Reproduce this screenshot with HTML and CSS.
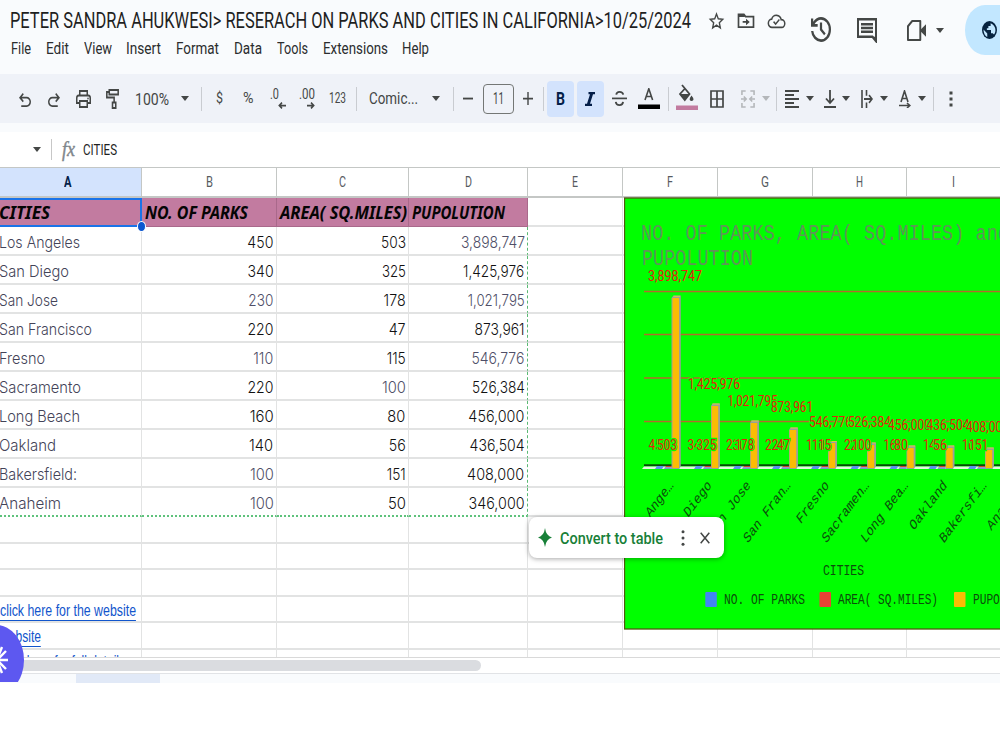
FILE: index.html
```html
<!DOCTYPE html>
<html lang="en">
<head>
<meta charset="utf-8">
<title>Parks and cities</title>
<link rel="stylesheet" href="styles.css">
</head>
<body>
<div class="app">
<header class="top">
  <div class="top-left">
    <div class="title-row">
      <span class="title" data-w="681">PETER SANDRA AHUKWESI&gt; RESERACH ON PARKS AND CITIES IN CALIFORNIA&gt;10/25/2024</span>
      <svg class="ic star" viewBox="0 0 24 24" preserveAspectRatio="none"><path d="M12 3.6l2.5 5.8 6.2.6-4.7 4.1 1.4 6.2-5.4-3.3-5.4 3.3L8 14.100 3.300 10l6.200-.6z" fill="none" stroke="#444746" stroke-width="1.900"/></svg>
      <svg class="ic folder" viewBox="0 0 24 24" preserveAspectRatio="none"><path d="M3 5h6.500l2 2.500H21V19.500H3z" fill="none" stroke="#444746" stroke-width="2"/><path d="M3 5h6l2 3H3zM8 12.700h4V10l4.500 3.700-4.500 3.700v-2.700H8z" fill="#444746"/></svg>
      <svg class="ic cloud" viewBox="0 0 24 24" preserveAspectRatio="none"><path d="M6.500 19a4.500 4.500 0 0 1-.6-9A6.300 6.300 0 0 1 18 10.600 4.200 4.200 0 0 1 18.500 19z" fill="none" stroke="#444746" stroke-width="1.900"/><path d="M8.300 12.700l2.600 2.600 4.700-4.900" fill="none" stroke="#444746" stroke-width="1.800"/></svg>
    </div>
    <nav class="menu">
      <span data-w="20">File</span><span data-w="23">Edit</span><span data-w="28">View</span><span data-w="35">Insert</span><span data-w="43">Format</span><span data-w="28">Data</span><span data-w="31">Tools</span><span data-w="65">Extensions</span><span data-w="27">Help</span>
    </nav>
  </div>
  <div class="top-right">
    <svg class="ic history" viewBox="3 3 18 18" preserveAspectRatio="none"><path fill="#444746" d="M12 21q-3.450 0-6.012-2.287T3.050 13H5.100q.35 2.600 2.313 4.300T12 19q2.925 0 4.963-2.037T19 12t-2.037-4.962T12 5q-1.725 0-3.225.8T6.250 8H9v2H3V4h2v2.350q1.275-1.600 3.113-2.475T12 3q1.875 0 3.513.713t2.850 1.924 1.925 2.850T21 12t-.712 3.513-1.925 2.850-2.850 1.925T12 21m2.800-4.800L11 12.400V7h2v4.600l3.200 3.200z"/></svg>
    <svg class="ic comment" viewBox="2 2 20 20" preserveAspectRatio="none"><path d="M3 3h18v17.500L17.500 17H3z" fill="none" stroke="#444746" stroke-width="2"/><path d="M6 7h12M6 10h12M6 13h12" stroke="#444746" stroke-width="1.900"/><path d="M22 22l-5-5h5z" fill="#444746"/></svg>
    <svg class="ic video" viewBox="0 0 20 20" preserveAspectRatio="none"><path d="M5.500 1H14V19H1V6z" fill="none" stroke="#444746" stroke-width="2" stroke-linejoin="round"/><path d="M14.500 9L20 4v12l-5.500-5z" fill="#444746"/></svg>
    <svg class="caret" viewBox="0 0 8 6" preserveAspectRatio="none"><path d="M0 0h8L4 6z"/></svg>
    <div class="share"><svg class="globe" viewBox="0 0 20 20" preserveAspectRatio="none"><circle cx="10" cy="10" r="10" fill="#06233f"/><path d="M2 9.500l5 4.500v3.800C4 16.800 2 13.500 2 9.500zM11.500 2.400V5.500H8.500V8H6.500v2h5.500v3.500h2.300l1.700 1.500c3.500-4 2.500-10-4.500-12.600z" fill="#c2e7ff"/></svg></div>
  </div>
</header>

<div class="toolbar">
  <i><svg class="u" viewBox="4 4 16 15" preserveAspectRatio="none"><path d="M7 19v-2h7.100q1.575 0 2.738-1Q18 15 18 13.500T16.838 11 14.100 10H7.800l2.600 2.600L9 14 4 9l5-5 1.400 1.400L7.800 8h6.300q2.425 0 4.163 1.575Q20 11.150 20 13.500t-1.738 3.925Q16.525 19 14.100 19z"/></svg></i>
  <i><svg class="u flip" viewBox="4 4 16 15" preserveAspectRatio="none"><path d="M7 19v-2h7.100q1.575 0 2.738-1Q18 15 18 13.500T16.838 11 14.100 10H7.800l2.600 2.600L9 14 4 9l5-5 1.400 1.400L7.800 8h6.300q2.425 0 4.163 1.575Q20 11.150 20 13.500t-1.738 3.925Q16.525 19 14.100 19z"/></svg></i>
  <i><svg class="print" viewBox="0 0 20 18" preserveAspectRatio="none"><path d="M5 5V1h10v4M5 13H1V8q0-2.500 2.500-2.500h13Q19 5.500 19 8v5h-4M5 11h10v6H5z" fill="none" stroke="#444746" stroke-width="2"/><circle cx="16" cy="8.500" r="1"/></svg></i>
  <i><svg class="paint" viewBox="0 0 16 20" preserveAspectRatio="none"><path d="M4 1h11v4.500H4zM4 3H1v5.500h9V13M8 13.500h4V19H8z" fill="none" stroke="#444746" stroke-width="1.900"/></svg></i>
  <i><span class="t16" data-w="34">100%</span></i>
  <i><svg class="caret" viewBox="0 0 8 6" preserveAspectRatio="none"><path d="M0 0h8L4 6z"/></svg></i>
  <i><b class="sep"></b></i>
  <i><span class="t15 up" data-w="7">$</span></i>
  <i><span class="t15 up" data-w="10.500">%</span></i>
  <i class="dec"><span class="t15" data-w="9">.0</span><svg viewBox="0 0 8 6" preserveAspectRatio="none"><path d="M8 3H1.500M4 .5L1.300 3 4 5.500" fill="none" stroke="#444746" stroke-width="1.500"/></svg></i>
  <i class="dec two"><span class="t15" data-w="16">.00</span><svg viewBox="0 0 8 6" preserveAspectRatio="none"><path d="M0 3h6.500M4 .5L6.700 3 4 5.500" fill="none" stroke="#444746" stroke-width="1.500"/></svg></i>
  <i><span class="t15 up" data-w="17">123</span></i>
  <i><b class="sep"></b></i>
  <i><span class="t16 up" data-w="49">Comic...</span></i>
  <i><svg class="caret" viewBox="0 0 8 6" preserveAspectRatio="none"><path d="M0 0h8L4 6z"/></svg></i>
  <i><b class="sep"></b></i>
  <i><svg class="pm" viewBox="0 0 10 12" preserveAspectRatio="none"><path d="M0 5.200h10v1.700H0z"/></svg></i>
  <i><span class="size"><span data-w="11">11</span></span></i>
  <i><svg class="pm" viewBox="0 0 10 12" preserveAspectRatio="none"><path d="M0 5.200h10v1.700H0zM4.300 0h1.400v12H4.300z"/></svg></i>
  <i class="sep-end"><b class="sep"></b></i>
  <i><span class="on"><span data-w="9">B</span></span></i>
  <i><span class="on"><svg class="ital" viewBox="0 0 10 15" preserveAspectRatio="none"><path d="M3.500 0H10v2.300H8L5 12.700h2V15H0v-2.300h2L5 2.300H3.500z"/></svg></span></i>
  <i><svg class="strike" viewBox="0 0 16 18" preserveAspectRatio="none"><path d="M0 8h16v1.800H0z"/><path d="M12 5Q11.500 2 8 2 5 2 4.500 5M4 12.500Q4.500 16 8 16t3.800-3.500" fill="none" stroke="#444746" stroke-width="1.900"/></svg></i>
  <i><svg class="color" viewBox="0 0 22 22" preserveAspectRatio="none"><path d="M7 12L10.800 .8 14.600 12M8.200 8.500h5.200" fill="none" stroke="#444746" stroke-width="1.600"/><path d="M0 16.500h22V21H0z" fill="#000"/></svg></i>
  <i><b class="sep"></b></i>
  <i><svg class="fill" viewBox="0 0 22 26" preserveAspectRatio="none"><path d="M6 1l7.500 9-4.700 6L4 10l5-5.500" fill="none" stroke="#444746" stroke-width="1.800"/><path d="M4 10h9.500l-4.700 6zM15.500 11.500q4 5 0 5.500-3.700-.5 0-5.500z"/><path d="M0 21.500h22V26H0z" fill="#c27ba0"/></svg></i>
  <i><svg class="borders" viewBox="0 0 14 18" preserveAspectRatio="none"><path d="M1 1h12v16H1zM7 1v16M1 9h12" fill="none" stroke="#444746" stroke-width="1.700"/></svg></i>
  <i class="merge"><svg class="m" viewBox="0 0 15 18" preserveAspectRatio="none"><path d="M5 1H1v4M10 1h4v4M5 17H1v-4M10 17h4v-4M0 9h5M15 9h-5M3 6.500L5.500 9 3 11.500M12 6.500L9.500 9l2.500 2.500" fill="none" stroke="#b4b7ba" stroke-width="1.700"/></svg><svg class="caret pale" viewBox="0 0 8 6" preserveAspectRatio="none"><path d="M0 0h8L4 6z"/></svg></i>
  <i><b class="sep"></b></i>
  <i class="pair"><svg class="m" viewBox="0 0 14 18" preserveAspectRatio="none"><path d="M0 1h14M0 5h9M0 9h14M0 13h9M0 17h14" stroke="#444746" stroke-width="1.800"/></svg><svg class="caret" viewBox="0 0 8 6" preserveAspectRatio="none"><path d="M0 0h8L4 6z"/></svg></i>
  <i class="pair"><svg class="n" viewBox="0 0 12 18" preserveAspectRatio="none"><path d="M6 0v12M2 8.500L6 13l4-4.500M0 17h12" fill="none" stroke="#444746" stroke-width="1.800"/></svg><svg class="caret" viewBox="0 0 8 6" preserveAspectRatio="none"><path d="M0 0h8L4 6z"/></svg></i>
  <i class="pair"><svg class="n" viewBox="0 0 12 16" preserveAspectRatio="none"><path d="M1 0v16M5.500 0v5M5.500 11v5M3 8h8M8 4.500L11 8l-3 3.500" fill="none" stroke="#444746" stroke-width="1.600"/></svg><svg class="caret" viewBox="0 0 8 6" preserveAspectRatio="none"><path d="M0 0h8L4 6z"/></svg></i>
  <i class="pair"><svg class="n" viewBox="0 0 12 18" preserveAspectRatio="none"><path d="M2 12L5.500 1 9 12M3 8.500h5M0 15.500h10.500M8 13l2.800 2.500L8 18" fill="none" stroke="#444746" stroke-width="1.600"/></svg><svg class="caret" viewBox="0 0 8 6" preserveAspectRatio="none"><path d="M0 0h8L4 6z"/></svg></i>
  <i><b class="sep"></b></i>
  <i><svg class="dots" viewBox="0 0 4 16" preserveAspectRatio="none"><path d="M.5.500h3v3h-3zM.5 6.500h3v3h-3zM.5 12.500h3v3h-3z"/></svg></i>
</div>

<div class="formula">
  <svg class="caret" viewBox="0 0 8 6" preserveAspectRatio="none"><path d="M0 0h8L4 6z"/></svg>
  <b class="bar"></b>
  <span class="fx" data-w="13">fx</span>
  <span class="val" data-w="34">CITIES</span>
</div>

<main class="sheet">
<table>
<colgroup><col class="a"><col class="b"><col class="c"><col class="d"><col class="e"><col class="f"><col class="e"><col class="f"><col class="f"></colgroup>
<thead><tr><th class="sel"><span data-w="7.500">A</span></th><th><span data-w="7">B</span></th><th><span data-w="7">C</span></th><th><span data-w="7">D</span></th><th><span data-w="6">E</span></th><th><span data-w="6">F</span></th><th><span data-w="8">G</span></th><th><span data-w="7">H</span></th><th><span data-w="3">I</span></th></tr></thead>
<tbody>
<tr class="head"><td><span data-w="51">CITIES</span></td><td><span data-w="103">NO. OF PARKS</span></td><td><span data-w="127">AREA( SQ.MILES)</span></td><td><span data-w="93">PUPOLUTION</span></td><td></td><td></td><td></td><td></td><td></td></tr>
<tr class="r"><td><span data-w="81">Los Angeles</span></td><td><span data-w="26">450</span></td><td><span data-w="25">503</span></td><td class="g"><span data-w="64">3,898,747</span></td><td></td><td></td><td></td><td></td><td></td></tr>
<tr class="r"><td><span data-w="70">San Diego</span></td><td><span data-w="26">340</span></td><td><span data-w="24">325</span></td><td><span data-w="61">1,425,976</span></td><td></td><td></td><td></td><td></td><td></td></tr>
<tr class="r"><td><span data-w="59">San Jose</span></td><td class="g"><span data-w="25">230</span></td><td><span data-w="22">178</span></td><td class="g"><span data-w="57">1,021,795</span></td><td></td><td></td><td></td><td></td><td></td></tr>
<tr class="r"><td><span data-w="93">San Francisco</span></td><td><span data-w="26">220</span></td><td><span data-w="17">47</span></td><td><span data-w="50">873,961</span></td><td></td><td></td><td></td><td></td><td></td></tr>
<tr class="r"><td><span data-w="46">Fresno</span></td><td class="g"><span data-w="20">110</span></td><td><span data-w="19">115</span></td><td class="g"><span data-w="53">546,776</span></td><td></td><td></td><td></td><td></td><td></td></tr>
<tr class="r"><td><span data-w="82">Sacramento</span></td><td><span data-w="26">220</span></td><td class="g"><span data-w="24">100</span></td><td><span data-w="53">526,384</span></td><td></td><td></td><td></td><td></td><td></td></tr>
<tr class="r"><td><span data-w="81">Long Beach</span></td><td><span data-w="24">160</span></td><td><span data-w="18">80</span></td><td><span data-w="56">456,000</span></td><td></td><td></td><td></td><td></td><td></td></tr>
<tr class="r"><td><span data-w="57">Oakland</span></td><td><span data-w="24">140</span></td><td><span data-w="17">56</span></td><td><span data-w="55">436,504</span></td><td></td><td></td><td></td><td></td><td></td></tr>
<tr class="r"><td><span data-w="78">Bakersfield:</span></td><td class="g"><span data-w="24">100</span></td><td><span data-w="19">151</span></td><td><span data-w="57">408,000</span></td><td></td><td></td><td></td><td></td><td></td></tr>
<tr class="r last"><td><span data-w="62">Anaheim</span></td><td class="g"><span data-w="24">100</span></td><td><span data-w="18">50</span></td><td><span data-w="56">346,000</span></td><td></td><td></td><td></td><td></td><td></td></tr>
<tr class="s"><td></td><td></td><td></td><td></td><td></td><td></td><td></td><td></td><td></td></tr>
<tr class="s"><td></td><td></td><td></td><td></td><td></td><td></td><td></td><td></td><td></td></tr>
<tr class="s"><td></td><td></td><td></td><td></td><td></td><td></td><td></td><td></td><td></td></tr>
<tr class="s"><td><a data-w="136">click here for the website</a></td><td></td><td></td><td></td><td></td><td></td><td></td><td></td><td></td></tr>
<tr class="s"><td><a data-w="41">website</a></td><td></td><td></td><td></td><td></td><td></td><td></td><td></td><td></td></tr>
<tr class="s end"><td><a data-w="125">click here for full details</a></td><td></td><td></td><td></td><td></td><td></td><td></td><td></td><td></td></tr>
</tbody>
</table>
<div class="cursor"></div><div class="handle"></div>

<svg class="chart" viewBox="624 197 376 433">
  <rect x="624.500" y="198" width="400" height="431" fill="#0f0" stroke="#4f5a10" stroke-width="1.300"/>
  <g class="ctitle"><text x="641" y="240" textLength="368" lengthAdjust="spacingAndGlyphs">NO. OF PARKS, AREA( SQ.MILES) and</text><text x="642" y="265" textLength="111" lengthAdjust="spacingAndGlyphs">PUPOLUTION</text></g>
  <path d="M644 291.500H1000M644 334.500H1000M644 378H1000M644 421.500H1000" stroke="#b46a2c" stroke-width="1.500"/>
  <path d="M644 465.300H1000" stroke="#064a06" stroke-width="2"/>
  <path d="M644 466.500H1000V469H642z" fill="#e6f7e2"/>
  <g fill="#5b92ee"><path id="bl" d="M657 466h7l-2 3h-7z"/><use href="#bl" x="39"/><use href="#bl" x="78"/><use href="#bl" x="117"/><use href="#bl" x="156"/><use href="#bl" x="195.500"/><use href="#bl" x="234.500"/><use href="#bl" x="273.500"/><use href="#bl" x="313"/></g>
  <g><path id="rd" d="M666 466h6v1.200h-7z" fill="#d0402c"/><path id="bb" d="M665 467.200h7v1.800h-8z" fill="#7d94cf"/>
  <use href="#rd" x="39"/><use href="#rd" x="78"/><use href="#rd" x="117"/><use href="#rd" x="156"/><use href="#rd" x="195.500"/><use href="#rd" x="234.500"/><use href="#rd" x="273.500"/><use href="#rd" x="313"/>
  <use href="#bb" x="39"/><use href="#bb" x="78"/><use href="#bb" x="117"/><use href="#bb" x="156"/><use href="#bb" x="195.500"/><use href="#bb" x="234.500"/><use href="#bb" x="273.500"/><use href="#bb" x="313"/></g>
  <g fill="#9b9f98"><path d="M671.500 298l2-2.500h7.300V466l-1.500 3h-7.800z"/><path d="M711 406l1.500-2.500h7.500V466l-1.500 3H711z"/><path d="M750 423l1.500-2.500h7.500V466l-1.500 3H750z"/><path d="M789 430l1.500-2.500h7.500V466l-1.500 3H789z"/><path d="M828 443l1.500-2h7.500v25l-1.500 3H828z"/><path d="M867 445l1.500-2.500h7.500V466l-1.500 3H867z"/><path d="M906.500 448l1.500-2.500h7.500V466l-1.500 3h-7.500z"/><path d="M945.500 448l1.500-2.500h7.500V466l-1.500 3h-7.500z"/><path d="M985 450l1.500-2.500h7.500V466l-1.500 3H985z"/></g>
  <g fill="#fbbc04"><path d="M672.500 298h6.500v170h-6.500zM711.700 406h6.500v62h-6.500zM750.700 423h6.500v45h-6.500zM789.700 430h6.500v38h-6.500zM828.700 443h6.500v25h-6.500zM867.700 445h6.500v23h-6.500zM907.200 448h6.500v20h-6.500zM946.200 448h6.500v20h-6.500zM985.700 450h6.500v18h-6.500z"/></g>
  <path d="M673.500 296.300h6.500M712.500 404h7M751.500 421h7M790.500 428h7M829.500 441.500h7M868.500 443h7M908 446h7M947 446h7M986.500 448h7" stroke="#d9c84a"/>
  <g class="lab">
    <text x="648.500" y="449.500" textLength="20">450</text><text x="687.500" y="449.500" textLength="20">340</text><text x="726" y="449.500" textLength="20">230</text><text x="765" y="449.500" textLength="20">220</text><text x="806" y="449.500" textLength="19">110</text><text x="844" y="449.500" textLength="20">220</text><text x="883.500" y="449.500" textLength="19">160</text><text x="923" y="449.500" textLength="19">140</text><text x="962" y="449.500" textLength="19">100</text>
    <text x="657" y="449.500" textLength="20">503</text><text x="696.500" y="449.500" textLength="20">325</text><text x="735" y="449.500" textLength="19">178</text><text x="777" y="449.500" textLength="13">47</text><text x="812" y="449.500" textLength="19">115</text><text x="852" y="449.500" textLength="19">100</text><text x="894" y="449.500" textLength="14">80</text><text x="933" y="449.500" textLength="14">56</text><text x="969" y="449.500" textLength="19">151</text>
    <text x="648" y="280.500" textLength="54">3,898,747</text><text x="688" y="388.500" textLength="52">1,425,976</text><text x="727.500" y="406" textLength="50">1,021,795</text><text x="771" y="411.500" textLength="42">873,961</text><text x="809" y="426.500" textLength="43">546,776</text><text x="848" y="427" textLength="43">526,384</text><text x="888" y="430" textLength="43">456,000</text><text x="926.500" y="430" textLength="43">436,504</text><text x="966" y="432" textLength="43">408,000</text>
  </g>
  <g class="axis">
    <text transform="translate(674 486) scale(.945 1.262) rotate(-45)">Los Ange…</text><text transform="translate(712 486) scale(.945 1.262) rotate(-45)">San Diego</text><text transform="translate(751 486) scale(.945 1.262) rotate(-45)">San Jose</text><text transform="translate(791 486) scale(.945 1.262) rotate(-45)">San Fran…</text><text transform="translate(829.500 486) scale(.945 1.262) rotate(-45)">Fresno</text><text transform="translate(869.500 486) scale(.945 1.262) rotate(-45)">Sacramen…</text><text transform="translate(908.500 486) scale(.945 1.262) rotate(-45)">Long Bea…</text><text transform="translate(947.500 486) scale(.945 1.262) rotate(-45)">Oakland</text><text transform="translate(987 486) scale(.945 1.262) rotate(-45)">Bakersfi…</text><text transform="translate(1025 486) scale(.945 1.262) rotate(-45)">Anaheim</text>
  </g>
  <g class="leg"><text x="823" y="575" textLength="41">CITIES</text><text x="724" y="604" textLength="81">NO. OF PARKS</text><text x="838" y="604" textLength="100">AREA( SQ.MILES)</text><text x="973" y="604" textLength="67">PUPOLUTION</text></g>
  <rect x="705.300" y="592" width="11.500" height="15" rx="1" fill="#4285f4"/><rect x="819.500" y="592" width="11.500" height="15" rx="1" fill="#ea4335"/><rect x="954" y="592" width="11.500" height="15" rx="1" fill="#fbbc04"/>
</svg>

<div class="popup">
  <svg class="spark" viewBox="0 0 14 18" preserveAspectRatio="none"><path d="M7 0q1 7.500 7 9-6 1.500-7 9-1-7.500-7-9 6-1.500 7-9z" fill="#188038"/></svg>
  <span data-w="103">Convert to table</span>
  <svg class="dots" viewBox="0 0 4 16" preserveAspectRatio="none"><circle cx="2" cy="1.800" r="1.500"/><circle cx="2" cy="8" r="1.500"/><circle cx="2" cy="14.200" r="1.500"/></svg>
  <svg class="x" viewBox="0 0 10 12" preserveAspectRatio="none"><path d="M.7.700l8.600 10.600M9.300.7L.7 11.300" stroke="#444746" stroke-width="1.500"/></svg>
</div>
</main>

<div class="scroll"><div class="thumb"></div></div>
<footer class="tabs"><div class="tab"></div></footer>
<div class="badge"><svg viewBox="0 0 24 57"><ellipse cx="-3.500" cy="35" rx="27.500" ry="35" fill="#5d58f0"/><path d="M0 35h8M-1 33l7-7M-1 37l7 7M-2 32l4-10M-2 38l4 10M-5 35H2" stroke="#fff" stroke-width="2.400"/></svg></div>
</div>
<script src="fit.js"></script>
</body>
</html>
```
FILE: styles.css
```css
* { box-sizing: border-box; }
body { margin: 0; background: #fff; font-family: Roboto, "Liberation Sans", sans-serif; color: #1f1f1f; }
.app { position: relative; width: 1000px; height: 750px; overflow: hidden; }
[data-w] { display: inline-block; white-space: nowrap; transform-origin: 0 50%; }
svg { flex: none; display: block; }

.top { display: flex; justify-content: space-between; height: 74px; background: #f9fbfd; }
.top-left { padding: 6px 0 0 10px; }
.title-row { display: flex; align-items: center; height: 29px; }
.title { font-size: 22px; line-height: 29px; }
.star { width: 17px; height: 20px; margin-left: 17px; }
.folder { width: 20px; height: 21px; margin-left: 11px; }
.cloud { width: 19px; height: 22px; margin-left: 11px; }
.menu { display: flex; gap: 14.800px; margin: 4px 0 0 1px; font-size: 16px; line-height: 20px; color: #2b2d2e; }
.top-right { display: flex; height: 60px; align-items: center; }
.history { width: 20px; height: 25px; margin: -1px 26px 0 0; }
.comment { width: 20px; height: 25px; margin: 1px 30px 0 0; }
.video { width: 19px; height: 21px; margin: 1px 10px 0 0; }
.caret { width: 8px; height: 5px; fill: #444746; }
.top-right .caret { margin-right: 21px; }
.share { width: 35px; height: 50px; border-radius: 20px 0 0 20px / 25px 0 0 25px; background: #c2e7ff; display: flex; align-items: center; padding-left: 17px; }
.globe { width: 15px; height: 18px; }

.toolbar { display: grid; height: 49px; padding-left: 10.500px; background: #eff2f8;
  grid-template-columns: 29px 29px 29px 29px 50px 17px 15px 21px 37px 23px 35px 25px 13px 62px 23px 12px 17px 44px 14px 12px 28px 31px 27px 33px 5px 33px 27px 40px 11px 36px 39px 36px 40px 2px 33px; }
.toolbar i { display: flex; align-items: center; justify-content: center; font-style: normal; min-width: 0; color: #444746; }
.toolbar svg { fill: #444746; }
.toolbar .pale { fill: #b4b7ba; }
.u { width: 12px; height: 14px; margin-top: 2px; }
.flip { transform: scaleX(-1); }
.print { width: 15px; height: 18px; }
.paint { width: 13px; height: 20px; }
.t16 { font-size: 17px; } .t15 { font-size: 15px; }
.up { position: relative; top: -1px; }
.sep { width: 1px; height: 24px; background: #c9ccd1; flex: none; }
.sep-end { padding-left: 6px; }
.toolbar .dec { flex-direction: column; align-items: flex-start; padding-left: 3px; justify-content: flex-start; line-height: 16px; padding-top: 12px; }
.toolbar .two { padding-left: 9px; }
.dec svg { width: 8px; height: 7px; margin: 0 0 0 8px; }
.pm { width: 10px; height: 13px; }
.size { display: flex; width: 31px; height: 30px; border: 1px solid #747775; border-radius: 4px; align-items: center; justify-content: center; font-size: 16px; flex: none; }
.on { display: flex; width: 27px; height: 36px; border-radius: 4px; background: #d3e3fd; align-items: center; justify-content: center; font-size: 18px; font-weight: 700; color: #041e49; flex: none; }
.toolbar .ital { width: 10px; height: 14px; fill: #041e49; }
.strike { width: 15px; height: 17px; }
.color { width: 22px; height: 22px; margin-top: 1px; }
.fill { width: 22px; height: 26px; margin-top: -3px; }
.borders { width: 14px; height: 18px; }
.m { width: 14px; height: 18px; } .n { width: 12px; height: 18px; }
.toolbar .merge { gap: 7px; justify-content: flex-start; padding-left: 10px; }
.pair { gap: 6.500px; }
.dots { width: 4px; height: 16px; fill: #444746; }

.formula { display: flex; align-items: center; height: 44px; border-top: 9px solid #f9fbfd; padding-left: 33px; }
.bar { width: 1px; height: 21px; background: #c7c7c7; margin: 0 10px 0 10px; }
.fx { font-family: "Liberation Serif", serif; font-style: italic; font-size: 20px; color: #80868b; -webkit-text-stroke: .4px #80868b; }
.val { font-size: 15.500px; margin-left: 8px; }

.sheet { position: relative; height: 491px; overflow: hidden; border-bottom: 1px solid #d9d9d9; }
table { table-layout: fixed; border-collapse: separate; border-spacing: 0; width: 1001px; }
.a { width: 142px; } .b { width: 135px; } .c { width: 132px; } .d { width: 119px; } .e { width: 95px; } .f { width: 94.500px; }
th { height: 31px; padding: 0; border: solid #c4c7c5; border-width: 1px 1px 2px 0; font-size: 14px; font-weight: 400; color: #575b5f; line-height: 26px; }
th.sel { background: #d3e3fd; color: #041e49; font-weight: 700; padding-right: 5px; }
td { height: 29px; padding: 0 2.500px; border: solid #e2e3e3; border-width: 0 1px 2px 0; text-align: right; font-family: Inter, sans-serif; font-weight: 300; font-size: 16.500px; line-height: 27px; color: #111; overflow: hidden; white-space: nowrap; }
.sheet td span { transform-origin: 100% 50%; vertical-align: top; position: relative; top: 2px; }
td:first-child { padding-left: 0; text-align: left; color: #434358; }
.sheet td:first-child span, .sheet .head td span { transform-origin: 0 50%; }
.sheet td:first-child span { left: -1px; }
.g { color: #4f4f68; }
.r td:nth-child(4) { border-right: 1px dashed #5bb974; }
.head td { text-align: left; font-family: "Noto Sans", sans-serif; font-size: 17px; font-weight: 700; font-style: italic; color: #050505; }
.head td:nth-child(-n+4) { background: #c27ba0; border-color: #a9698b; border-style: solid; border-bottom-width: 1px; padding-left: 3px; }
.head td:first-child:first-child { padding-left: 0; color: #050505; }
.sheet .head td span { top: 0; }
.last td:nth-child(-n+4) { border-bottom: 2px dotted #5fc27c; }
.s td { height: 26.500px; line-height: 24px; font-family: "Liberation Sans", sans-serif; font-size: 16px; font-weight: 400; padding-top: 0; padding-bottom: 0; }
a { color: #1155cc; border-bottom: 1.500px solid #1155cc; line-height: 18px; vertical-align: top; margin-top: 5px; }
.end a { margin-top: 3px; }

.cursor { position: absolute; left: -3px; top: 31px; width: 145px; height: 29px; border: 2px solid #1a73e8; }
.handle { position: absolute; left: 137px; top: 54px; width: 9px; height: 11px; border-radius: 50%; background: #0b57d0; border: 1px solid #fff; }
.chart { position: absolute; left: 624px; top: 30px; width: 376px; height: 433px; }
.ctitle { font: 22.500px "Liberation Mono", monospace; fill: #5f9558; }
.lab { font: 15px Roboto, sans-serif; fill: #e8200c; stroke: #0f0; stroke-width: 2.500px; paint-order: stroke; }
.leg { font: 14px "Liberation Mono", monospace; fill: #0b4d0b; }
.axis { font: 12px "Liberation Mono", monospace; fill: #0b4d0b; text-anchor: end; }
.popup { position: absolute; left: 529px; top: 350px; width: 194.500px; height: 41px; border-radius: 8px; background: #fff; box-shadow: 0 1px 5px rgba(0,0,0,.35); display: flex; align-items: center; padding-left: 9px; color: #188038; font-size: 17px; font-weight: 500; }
.spark { width: 14px; height: 19px; margin-right: 8px; }
.popup .dots { margin-left: 18px; }
.x { width: 10px; height: 12px; margin-left: 15px; }

.scroll { height: 16px; padding-top: 2px; border-bottom: 1px solid #e1e3e6; }
.thumb { width: 481px; height: 11px; border-radius: 0 6px 6px 0; background: #dadce0; }
.tabs { height: 9px; background: #f9fbfd; padding-left: 76px; }
.tab { width: 84px; height: 9px; background: #e1e9f7; }
.badge { position: absolute; left: 0; top: 625px; width: 24px; height: 57px; }
```
FILE: fit.js
```js
// Condense each label to the width given in its data-w attribute.
document.querySelectorAll('[data-w]').forEach(function (el) {
  var want = parseFloat(el.dataset.w);
  var natural = el.getBoundingClientRect().width;
  var fromRight = getComputedStyle(el.parentElement).textAlign === 'right';
  el.style.transform = 'scaleX(' + want / natural + ')';
  el.style[fromRight ? 'marginLeft' : 'marginRight'] = (want - natural) + 'px';
});
document.querySelectorAll('.lab text, .leg text').forEach(function (el) {
  el.setAttribute('lengthAdjust', 'spacingAndGlyphs');
});
```
